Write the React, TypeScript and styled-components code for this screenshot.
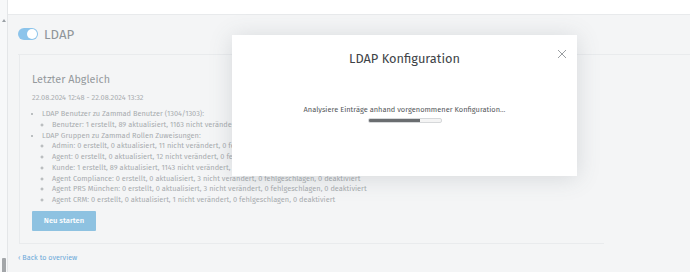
import styled, { createGlobalStyle } from "styled-components";

const GlobalStyle = createGlobalStyle`
  html, body {
    margin: 0;
    padding: 0;
    width: 690px;
    height: 272px;
    overflow: hidden;
    background: #ffffff;
    font-family: "Fira Sans", "Noto Sans", "Open Sans", sans-serif;
  }
`;

const Page = styled.div`
  display: flex;
  width: 690px;
  height: 272px;
`;

const ScrollTrack = styled.div`
  width: 7px;
  flex-shrink: 0;
  display: flex;
  flex-direction: column;
  justify-content: space-between;
  align-items: center;
  padding-top: 19px;
  background: #f7f8f9;
  border-right: 1px solid #e4e6e8;
`;

const ScrollArrow = styled.div`
  width: 0;
  height: 0;
  border-left: 2px solid transparent;
  border-right: 2px solid transparent;
  border-bottom: 3px solid #9aa0a5;
`;

const ScrollThumb = styled.div`
  width: 4px;
  height: 14px;
  background: #a3a6a9;
  border-radius: 1px 1px 0 0;
`;

const Main = styled.div`
  flex: 1;
  display: flex;
  flex-direction: column;
`;

const TopStrip = styled.div`
  height: 14px;
  background: #ffffff;
  border-bottom: 1px solid #e8eaec;
`;

const Content = styled.div`
  flex: 1;
  background: #f4f5f6;
  padding-left: 10px;
  display: flex;
  flex-direction: column;
`;

const Header = styled.div`
  display: flex;
  align-items: center;
  gap: 6px;
  height: 38px;
  padding-bottom: 1px;
  border-bottom: 1px solid #e9ebed;
`;

const Toggle = styled.div`
  width: 20px;
  height: 12px;
  border-radius: 6px;
  background: #8cc4eb;
  position: relative;
`;

const Knob = styled.div`
  position: absolute;
  right: 1px;
  top: 1px;
  width: 10px;
  height: 10px;
  border-radius: 50%;
  background: #ffffff;
`;

const HeaderTitle = styled.span`
  font-size: 13.2px;
  color: #8f959a;
`;

const Card = styled.div`
  box-sizing: border-box;
  margin-left: 1px;
  width: 585px;
  border-left: 1px solid #e9ebed;
  border-bottom: 1px solid #e9ebed;
  padding: 17px 0 12px 12px;
  display: flex;
  flex-direction: column;
`;

const CardTitle = styled.div`
  font-size: 10.8px;
  color: #94999d;
  line-height: 16px;
`;

const Stamp = styled.div`
  font-size: 7.4px;
  color: #a8acaf;
  margin-top: 5px;
  line-height: 10px;
`;

const List = styled.ul<{ $nested?: boolean }>`
  margin: ${(p) => (p.$nested ? "0" : "6px 0 0 0")};
  padding-left: 10px;
  list-style: ${(p) => (p.$nested ? "circle" : "disc")};
  font-size: 7.4px;
  line-height: 10.75px;
  color: #a8acaf;
  white-space: nowrap;
`;

const Button = styled.div`
  margin-top: 5px;
  width: 64px;
  height: 20px;
  background: #8ec2e1;
  color: #ffffff;
  border-radius: 1px;
  font-size: 7.6px;
  font-weight: 500;
  display: flex;
  align-items: center;
  justify-content: center;
`;

const BackLink = styled.div`
  margin-top: 9px;
  font-size: 7.2px;
  color: #6ea9d9;
`;

const Modal = styled.div`
  position: absolute;
  left: 232px;
  top: 35px;
  width: 345px;
  height: 141px;
  background: #ffffff;
  box-shadow: 0 2px 22px rgba(80, 90, 100, 0.18);
  display: flex;
  flex-direction: column;
  align-items: center;
`;

const Close = styled.div`
  position: absolute;
  right: 10px;
  top: 9px;
  width: 10px;
  height: 10px;
`;

const ModalTitle = styled.div`
  margin-top: 15px;
  font-size: 12.8px;
  color: #3e4347;
  line-height: 18px;
`;

const Message = styled.div`
  margin-top: 37px;
  font-size: 7.45px;
  color: #55595c;
  line-height: 10px;
`;

const Progress = styled.div`
  margin-top: 3px;
  width: 72px;
  height: 3px;
  border: 1px solid #d6d8da;
  border-radius: 2px;
  background: #f4f4f4;
  overflow: hidden;
`;

const ProgressFill = styled.div`
  height: 100%;
  background: #6a6d70;
`;

const groups = [
  "Admin: 0 erstellt, 0 aktualisiert, 11 nicht verändert, 0 fehlgeschlagen, 0 deaktiviert",
  "Agent: 0 erstellt, 0 aktualisiert, 12 nicht verändert, 0 fehlgeschlagen, 0 deaktiviert",
  "Kunde: 1 erstellt, 89 aktualisiert, 1143 nicht verändert, 0 fehlgeschlagen, 0 deaktiviert",
  "Agent Compliance: 0 erstellt, 0 aktualisiert, 3 nicht verändert, 0 fehlgeschlagen, 0 deaktiviert",
  "Agent PRS München: 0 erstellt, 0 aktualisiert, 3 nicht verändert, 0 fehlgeschlagen, 0 deaktiviert",
  "Agent CRM: 0 erstellt, 0 aktualisiert, 1 nicht verändert, 0 fehlgeschlagen, 0 deaktiviert",
];

export default function App() {
  return (
    <>
      <GlobalStyle />
      <Page>
        <ScrollTrack>
          <ScrollArrow />
          <ScrollThumb />
        </ScrollTrack>
        <Main>
          <TopStrip />
          <Content>
            <Header>
              <Toggle>
                <Knob />
              </Toggle>
              <HeaderTitle>LDAP</HeaderTitle>
            </Header>
            <Card>
              <CardTitle>Letzter Abgleich</CardTitle>
              <Stamp>22.08.2024 12:48 - 22.08.2024 13:32</Stamp>
              <List>
                <li>
                  LDAP Benutzer zu Zammad Benutzer (1304/1303):
                  <List $nested>
                    <li>Benutzer: 1 erstellt, 89 aktualisiert, 1163 nicht verändert, 0 fehlgeschlagen, 0 deaktiviert</li>
                  </List>
                </li>
                <li>
                  LDAP Gruppen zu Zammad Rollen Zuweisungen:
                  <List $nested>
                    {groups.map((g) => (
                      <li key={g}>{g}</li>
                    ))}
                  </List>
                </li>
              </List>
              <Button>Neu starten</Button>
            </Card>
            <BackLink>‹ Back to overview</BackLink>
          </Content>
        </Main>
        <Modal>
          <Close>
            <svg width="10" height="10" viewBox="0 0 10 10">
              <path d="M1 1 L9 9 M9 1 L1 9" stroke="#9a9ea1" strokeWidth="1" />
            </svg>
          </Close>
          <ModalTitle>LDAP Konfiguration</ModalTitle>
          <Message>Analysiere Einträge anhand vorgenommener Konfiguration...</Message>
          <Progress>
            <ProgressFill style={{ width: "71%" }} />
          </Progress>
        </Modal>
      </Page>
    </>
  );
}
